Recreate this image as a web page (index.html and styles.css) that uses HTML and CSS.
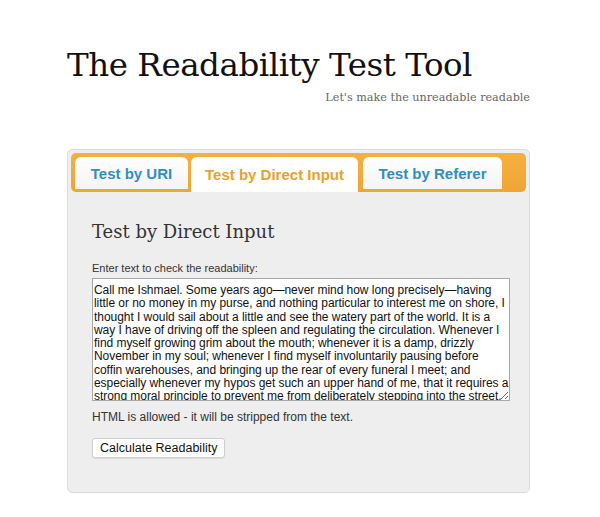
FILE: index.html
```html
<!DOCTYPE html>
<html lang="en">
<head>
<meta charset="utf-8">
<title>The Readability Test Tool</title>
<link rel="stylesheet" href="styles.css">
</head>
<body>
<div class="page">
  <header class="masthead">
    <h1 class="title">The Readability Test Tool</h1>
    <p class="tagline">Let's make the unreadable readable</p>
  </header>
  <section class="panel">
    <nav class="tabs">
      <a class="tab">Test by URI</a>
      <a class="tab active">Test by Direct Input</a>
      <a class="tab">Test by Referer</a>
    </nav>
    <div class="content">
      <h2 class="heading">Test by Direct Input</h2>
      <label class="label" for="txt">Enter text to check the readability:</label>
      <textarea id="txt" class="input" wrap="off">Call me Ishmael. Some years ago—never mind how long precisely—having
little or no money in my purse, and nothing particular to interest me on shore, I
thought I would sail about a little and see the watery part of the world. It is a
way I have of driving off the spleen and regulating the circulation. Whenever I
find myself growing grim about the mouth; whenever it is a damp, drizzly
November in my soul; whenever I find myself involuntarily pausing before
coffin warehouses, and bringing up the rear of every funeral I meet; and
especially whenever my hypos get such an upper hand of me, that it requires a
strong moral principle to prevent me from deliberately stepping into the street,
and methodically knocking people's hats off—then, I account it high time to get
to sea as soon as I can.</textarea>
      <p class="note">HTML is allowed - it will be stripped from the text.</p>
      <button class="btn" type="button">Calculate Readability</button>
    </div>
  </section>
</div>
</body>
</html>
```

FILE: styles.css
```css
html, body {
  margin: 0;
  padding: 0;
  background: #ffffff;
}

.page {
  width: 463px;
  margin-left: 67px;
  padding-top: 43px;
  font-family: "Liberation Sans", Arial, sans-serif;
}

.masthead {
  display: flex;
  flex-direction: column;
}

.title {
  margin: 0;
  font-family: "DejaVu Serif", serif;
  font-weight: normal;
  font-size: 32.5px;
  line-height: 44px;
  color: #111;
  letter-spacing: -0.45px;
}

.tagline {
  margin: 4px 0 0 0;
  align-self: flex-end;
  font-family: "DejaVu Serif", serif;
  font-size: 11.2px;
  line-height: 14px;
  color: #666;
}

.panel {
  margin-top: 44px;
  background: #eeeeee;
  border: 1px solid #dcdcdc;
  border-radius: 5px;
  padding: 3px 3px 0 3px;
  height: 344px;
  box-sizing: border-box;
}

.tabs {
  display: flex;
  align-items: flex-end;
  gap: 3px;
  height: 39px;
  box-sizing: border-box;
  padding: 4px 4px 0 4px;
  background: linear-gradient(#f4b043, #f0a534);
  border-radius: 5px;
}

.tab {
  display: flex;
  align-items: center;
  justify-content: center;
  height: 32px;
  margin-bottom: 3px;
  padding: 0 10px;
  background: linear-gradient(#ffffff, #f4f4f4);
  border-radius: 6px 6px 0 0;
  font-weight: bold;
  font-size: 15px;
  color: #2f8fc2;
  box-sizing: border-box;
}

.tab:nth-child(1) { width: 113px; }
.tab:nth-child(3) { width: 139px; margin-left: 2px; }

.tab.active {
  width: 167px;
  height: 35px;
  margin-bottom: 0;
  background: #ffffff;
  color: #eb9f2c;
}

.content {
  display: flex;
  flex-direction: column;
  align-items: flex-start;
  padding: 0 0 0 21px;
}

.heading {
  margin: 28px 0 0 0;
  font-family: "DejaVu Serif", serif;
  font-weight: normal;
  font-size: 18px;
  line-height: 24px;
  color: #333;
}

.label {
  margin-top: 17px;
  font-size: 11px;
  line-height: 14px;
  color: #333;
}

.input {
  margin-top: 3px;
  width: 418px;
  height: 123px;
  box-sizing: border-box;
  padding: 5px 1px 0 1px;
  border: 1px solid #a9a9a9;
  background: #fff;
  font-family: "Liberation Sans", Arial, sans-serif;
  font-size: 12px;
  line-height: 13.3px;
  letter-spacing: -0.05px;
  white-space: pre;
  color: #111;
  resize: both;
  overflow: hidden;
}

.note {
  margin: 9px 0 0 0;
  font-size: 12px;
  line-height: 15px;
  color: #333;
}

.btn {
  margin-top: 13px;
  height: 20px;
  padding: 0 7px;
  background: #fff;
  border: 1px solid #cfcfcf;
  border-radius: 3px;
  font-family: "Liberation Sans", Arial, sans-serif;
  font-size: 12.5px;
  color: #111;
  box-shadow: 0 1px 1px rgba(0,0,0,0.08);
}
```
